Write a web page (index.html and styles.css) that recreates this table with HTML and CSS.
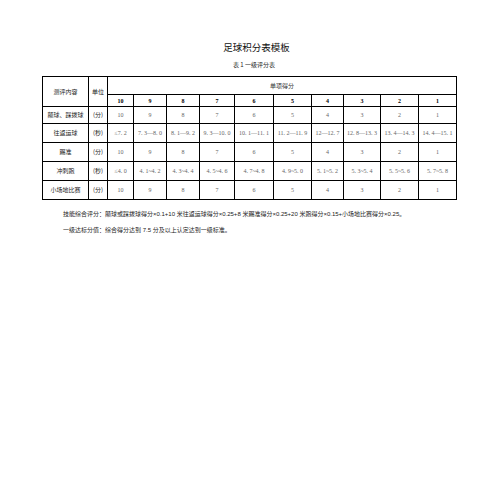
FILE: index.html
```html
<!DOCTYPE html>
<html lang="zh-CN">
<head>
<meta charset="utf-8">
<title>足球积分表模板</title>
<link rel="stylesheet" href="styles.css">
</head>
<body>
<div class="page">
  <h1 class="title">足球积分表模板</h1>
  <p class="caption">表 1 一级评分表</p>
  <table class="score">
    <colgroup>
      <col style="width:46px"><col style="width:19px"><col style="width:26px"><col style="width:33px"><col style="width:33px"><col style="width:35px"><col style="width:39px"><col style="width:38px"><col style="width:32px"><col style="width:37px"><col style="width:38px"><col style="width:38px">
    </colgroup>
    <tr class="h1">
      <td rowspan="2" class="cn">测评内容</td>
      <td rowspan="2" class="cn">单位</td>
      <td colspan="10" class="cn group">单项得分</td>
    </tr>
    <tr class="h2">
      <td>10</td><td>9</td><td>8</td><td>7</td><td>6</td><td>5</td><td>4</td><td>3</td><td>2</td><td>1</td>
    </tr>
    <tr class="r1">
      <td class="cn">颠球、踩拨球</td><td class="cn">(分)</td>
      <td class="num">10</td><td class="num">9</td><td class="num">8</td><td class="num">7</td><td class="num">6</td><td class="num">5</td><td class="num">4</td><td class="num">3</td><td class="num">2</td><td class="num">1</td>
    </tr>
    <tr class="r">
      <td class="cn">往返运球</td><td class="cn">(秒)</td>
      <td class="num">≤7. 2</td><td class="num">7. 3—8. 0</td><td class="num">8. 1—9. 2</td><td class="num">9. 3—10. 0</td><td class="num">10. 1—11. 1</td><td class="num">11. 2—11. 9</td><td class="num">12—12. 7</td><td class="num">12. 8—13. 3</td><td class="num">13. 4—14. 3</td><td class="num">14. 4—15. 1</td>
    </tr>
    <tr class="r">
      <td class="cn">踢准</td><td class="cn">(分)</td>
      <td class="num">10</td><td class="num">9</td><td class="num">8</td><td class="num">7</td><td class="num">6</td><td class="num">5</td><td class="num">4</td><td class="num">3</td><td class="num">2</td><td class="num">1</td>
    </tr>
    <tr class="r">
      <td class="cn">冲刺跑</td><td class="cn">(秒)</td>
      <td class="num">≤4. 0</td><td class="num">4. 1~4. 2</td><td class="num">4. 3~4. 4</td><td class="num">4. 5~4. 6</td><td class="num">4. 7~4. 8</td><td class="num">4. 9~5. 0</td><td class="num">5. 1~5. 2</td><td class="num">5. 3~5. 4</td><td class="num">5. 5~5. 6</td><td class="num">5. 7~5. 8</td>
    </tr>
    <tr class="r">
      <td class="cn">小场地比赛</td><td class="cn">(分)</td>
      <td class="num">10</td><td class="num">9</td><td class="num">8</td><td class="num">7</td><td class="num">6</td><td class="num">5</td><td class="num">4</td><td class="num">3</td><td class="num">2</td><td class="num">1</td>
    </tr>
  </table>
  <p class="note first">技能综合评分：颠球或踩拨球得分×0.1+10 米往返运球得分×0.25+8 米踢准得分×0.25+20 米跑得分×0.15+小场地比赛得分×0.25。</p>
  <p class="note">一级达标分值：综合得分达到 7.5 分及以上认定达到一级标准。</p>
</div>
</body>
</html>
```
FILE: styles.css
```css
html, body {
  margin: 0;
  padding: 0;
  background: #ffffff;
}
.page {
  width: 496px;
  height: 491px;
  padding-top: 41px;
  box-sizing: border-box;
  font-family: "Noto Sans CJK SC", "Noto Sans", sans-serif;
  color: #222;
}
.title {
  margin: 0;
  padding-left: 17px;
  text-align: center;
  font-size: 9.5px;
  line-height: 13px;
  font-weight: normal;
  color: #111;
}
.caption {
  margin: 5px 0 0 0;
  padding-left: 12px;
  text-align: center;
  font-size: 6px;
  line-height: 11px;
  color: #222;
}
.score {
  margin: 6px 0 0 42px;
  border-collapse: collapse;
  table-layout: fixed;
  width: 413px;
  font-size: 6px;
}
.score td {
  border: 1px solid #000;
  padding: 0;
  text-align: center;
  vertical-align: middle;
  line-height: 8px;
  white-space: nowrap;
  overflow: hidden;
}
.score .h1 { height: 18px; }
.score .h2 { height: 12px; }
.score .h2 td {
  font-family: "Liberation Serif", "Noto Sans CJK SC", serif;
  font-weight: bold;
  font-size: 6px;
  color: #000;
}
.score .r1 { height: 17px; }
.score .r { height: 19px; }
.score .cn {
  font-family: "Noto Sans CJK SC", sans-serif;
  color: #222;
}
.score .group {
  color: #333;
}
.score .num {
  font-family: "Liberation Serif", "Noto Serif CJK SC", "Noto Sans CJK SC", serif;
  color: #666;
  font-size: 6px;
}
.note {
  margin: 0;
  padding-left: 63px;
  font-family: "Liberation Sans", "Noto Sans CJK SC", sans-serif;
  font-size: 6px;
  line-height: 16px;
  color: #222;
}
.note.first {
  margin-top: 6px;
}
```
